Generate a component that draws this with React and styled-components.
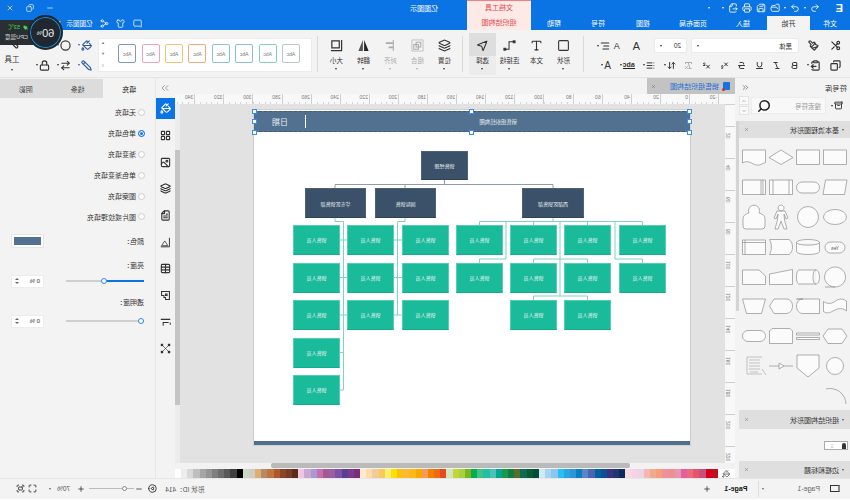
import React from 'react';
import styled, { createGlobalStyle } from 'styled-components';
import {
  Scissors, Paintbrush, Copy, ClipboardPaste, Bold, Italic, Underline, Strikethrough, Subscript, Superscript,
  RemoveFormatting, ArrowUpDown, List, Square, Type, Layers, AlignLeft,
  PaintBucket, LayoutGrid, Image, FileText, Table,
  Search, Undo2, Redo2, Save, FolderOpen, Printer, FileOutput, Share2, Shirt, MessageSquare, Crown, Minus, X,
  Plus, Lock, ArrowLeftRight, Pencil, PlayCircle, Fullscreen, Maximize, ChevronsRight, ChevronsLeft, Copy as RestoreIcon,
  Leaf, ChevronUp, ChevronDown, Archive, Circle, MousePointer2, Wrench,
} from 'lucide-react';

const GlobalStyle = createGlobalStyle`
  html, body { margin: 0; padding: 0; background: #f3f3f3; }
  body { font-family: "Liberation Sans", "Noto Sans CJK SC", sans-serif; }
`;

/* the reference is a horizontally flipped capture, so the whole window is laid out normally and flipped */
const Window = styled.div`
  position: relative;
  width: 850px;
  height: 500px;
  overflow: hidden;
  display: flex;
  flex-direction: column;
  background: #f3f3f3;
  color: #333;
  font-size: 7px;
  transform: scaleX(-1);
`;

/* title bar */
const TitleBar = styled.div`
  display: flex;
  height: 30px;
  background: #0a74e4;
  color: #fff;
`;
const TitleLeft = styled.div`
  width: 319px;
  display: flex;
  flex-direction: column;
`;
const TitleRight = styled.div`
  flex: 1;
  display: flex;
  flex-direction: column;
`;
const QuickBar = styled.div`
  height: 16px;
  display: flex;
  align-items: center;
  padding-left: 7px;
  gap: 4px;
  svg { width: 10px; height: 10px; flex: none; }
`;
const Logo = styled.span`
  width: 13px;
  font: bold 11px "Liberation Sans", sans-serif;
  margin-right: 6px;
`;
const TinyCaret = styled.span`
  width: 0;
  height: 0;
  flex: none;
  border-left: 1.5px solid transparent;
  border-right: 1.5px solid transparent;
  border-top: 2px solid ${(p) => p.$color || 'currentColor'};
  margin-left: ${(p) => p.$gap || 0}px;
`;
const TabRow = styled.div`
  height: 14px;
  display: flex;
`;
const Tab = styled.div`
  width: ${(p) => p.$w}px;
  display: flex;
  align-items: center;
  justify-content: center;
  background: ${(p) => (p.$active ? '#f3f3f3' : 'transparent')};
  color: ${(p) => (p.$active ? '#333' : '#fff')};
`;
const ContextTab = styled.div`
  width: 64px;
  display: flex;
  flex-direction: column;
  align-items: center;
  background: #fde9e6;
  border-top: 1px solid #f08080;
  box-sizing: border-box;
  color: #e5484d;
  span { height: 14.5px; line-height: 14.5px; }
`;
const AppTitle = styled.div`
  height: 16px;
  display: flex;
  align-items: center;
  padding: 0 6px 0 29px;
  svg { width: 8px; height: 8px; margin-left: 12px; }
`;
const AppName = styled.span`
  margin-right: auto;
`;
const AccountRow = styled.div`
  height: 14px;
  display: flex;
  align-items: center;
  padding-left: 325px;
  gap: 7.5px;
  svg { width: 9px; height: 9px; flex: none; }
`;
const Brand = styled.span`
  margin: 0 -2px 0 0;
  font-size: 6.5px;
`;

/* ribbon */
const Ribbon = styled.div`
  height: 48px;
  display: flex;
  background: #f3f3f3;
  border-bottom: 1px solid #e4e4e4;
  box-sizing: border-box;
`;
const SmallGrid = styled.div`
  display: grid;
  grid-template-columns: repeat(${(p) => p.$cols}, ${(p) => p.$col}px);
  grid-auto-rows: 20px;
  padding-top: 5px;
  margin-left: ${(p) => p.$ml || 0}px;
  justify-items: center;
  align-items: center;
`;
const SmallIcon = styled.div`
  display: flex;
  align-items: center;
  gap: 1px;
  color: ${(p) => p.$color || '#333'};
  svg { width: ${(p) => p.$size || 11}px; height: ${(p) => p.$size || 11}px; stroke-width: 2.5; }
`;
const FontGroup = styled.div`
  width: 216px;
  margin-left: 4px;
  display: flex;
  flex-direction: column;
`;
const FontRow = styled.div`
  display: flex;
  align-items: center;
  height: 15px;
  margin-top: 8px;
  gap: 4px;
`;
const FormatRow = styled.div`
  display: flex;
  align-items: center;
  height: 14px;
  margin-top: 5px;
  gap: 8.6px;
  svg { width: 9px; height: 9px; stroke-width: 2.6; }
`;
const SelectBox = styled.div`
  width: ${(p) => p.$w}px;
  height: 15px;
  box-sizing: border-box;
  background: #fff;
  border: 1px solid #eaeaea;
  border-radius: 2px;
  display: flex;
  align-items: center;
  justify-content: space-between;
  padding: 0 5px 0 ${(p) => p.$pl}px;
  font-size: 6.5px;
`;
const LetterIcon = styled.span`
  margin-left: ${(p) => p.$ml || 0}px;
  font: ${(p) => p.$size || 10}px "Liberation Sans", sans-serif;
  color: #333;
`;
const UnderBar = styled.span`
  border-bottom: 1.5px solid #222;
  line-height: 7px;
  font: bold 7px "Liberation Sans", sans-serif;
`;
const Sep = styled.div`
  width: 1px;
  height: 36px;
  align-self: center;
  background: #d9d9d9;
  margin: 0 ${(p) => p.$r}px 0 ${(p) => p.$l}px;
`;
const BigButton = styled.div`
  width: 27px;
  height: 42px;
  margin-top: 3px;
  display: flex;
  flex-direction: column;
  align-items: center;
  color: ${(p) => (p.$dim ? '#aaa' : '#333')};
  background: ${(p) => (p.$active ? 'linear-gradient(#dedede 0 55%, #ececec 55%)' : 'transparent')};
  svg { width: 13px; height: 13px; margin-top: 6px; }
  span { margin-top: 5px; line-height: 8px; white-space: nowrap; font-size: 6.6px; }
  i { margin-top: 3px; }
`;
const Gallery = styled.div`
  width: 214px;
  height: 34px;
  margin-top: 8px;
  padding: 0 0 3px 11px;
  background: #fff;
  border: 1px solid #ececec;
  box-sizing: border-box;
  display: flex;
  align-items: center;
  gap: 5.4px;
`;
const StyleCard = styled.div`
  width: 18px;
  height: 19px;
  flex: none;
  box-sizing: border-box;
  border: 1px solid ${(p) => p.$color};
  border-radius: 2px;
  display: flex;
  align-items: center;
  justify-content: center;
  color: #777;
  font: 5px "Liberation Sans", sans-serif;
`;
const GalleryArrows = styled.div`
  margin-left: 8px;
  height: 28px;
  display: flex;
  flex-direction: column;
  justify-content: space-between;
  align-items: center;
  color: #777;
  font-size: 4px;
`;
const ToolLabel = styled.div`
  margin-left: 13px;
  width: 16px;
  display: flex;
  flex-direction: column;
  align-items: center;
  padding-top: 5px;
  svg { width: 14px; height: 14px; margin-bottom: 4px; }
  span { font-size: 7.5px; }
  i { margin-top: 5px; }
`;

/* cpu badge sits over the ribbon */
const CpuBadge = styled.div`
  position: absolute;
  left: 787px;
  top: 15px;
  width: 35px;
  height: 35px;
  border-radius: 50%;
  background: #20272e;
  box-sizing: border-box;
  border: 2px solid #20272e;
  display: flex;
  align-items: center;
  justify-content: center;
  color: #eee;
  font: 11px "Liberation Sans", sans-serif;
  box-shadow: inset 0 0 0 1px #1592e6;
  z-index: 3;
  small { font-size: 6px; }
`;
const CpuPill = styled.div`
  position: absolute;
  left: 817px;
  top: 20px;
  width: 33px;
  height: 25px;
  box-sizing: border-box;
  padding-left: 5px;
  background: #2a2f34;
  color: #ddd;
  z-index: 2;
  display: flex;
  flex-direction: column;
  justify-content: center;
  gap: 3px;
  font-size: 5.6px;
  line-height: 7px;
  white-space: nowrap;
`;
const CpuTemp = styled.div`
  display: flex;
  align-items: center;
  gap: 3px;
  color: #3fdc4f;
  svg { width: 5px; height: 7px; fill: #3fdc4f; }
`;

/* body */
const Body = styled.div`
  flex: 1;
  display: flex;
  min-height: 0;
`;
const SymbolPanel = styled.div`
  position: relative;
  width: 115px;
  flex: none;
  display: flex;
  flex-direction: column;
  box-sizing: border-box;
  padding-right: 4px;
  background: #f3f3f3;
  overflow: hidden;
`;
const SymbolThumb = styled.i`
  position: absolute;
  right: 1px;
  top: 43px;
  width: 3px;
  height: 190px;
  background: #d4d4d4;
`;
const PanelHead = styled.div`
  height: 19px;
  display: flex;
  align-items: center;
  justify-content: space-between;
  padding: 0 2px 0 3px;
  font-size: 7.4px;
  svg { width: 9px; height: 9px; color: #666; }
`;
const SearchRow = styled.div`
  height: 17px;
  display: flex;
  align-items: center;
  padding-left: 7px;
  svg { flex: none; }
`;
const SearchBox = styled.div`
  width: 78px;
  height: 17px;
  margin-left: 5px;
  box-sizing: border-box;
  background: #f8f8f8;
  border: 1px solid #ececec;
  display: flex;
  align-items: center;
  justify-content: space-between;
  padding: 0 5px 0 4px;
  color: #999;
  font-size: 6.5px;
`;
const Stepper = styled.div`
  width: 11px;
  margin-left: 2px;
  display: flex;
  flex-direction: column;
  gap: 1px;
  div {
    height: 7px;
    background: #fafafa;
    border: 1px solid #e4e4e4;
    display: flex;
    align-items: center;
    justify-content: center;
  }
  svg { width: 6px; height: 6px; color: #777; }
`;
const CategoryBar = styled.div`
  height: ${(p) => p.$h || 17}px;
  margin-top: ${(p) => p.$mt || 0}px;
  flex: none;
  background: #dfdfdf;
  display: flex;
  align-items: center;
  padding: 0 5px 0 6px;
  gap: 3px;
  color: #333;
  svg { margin-left: auto; width: 5px; height: 5px; color: #666; }
`;
const ShapeGrid = styled.div`
  display: grid;
  grid-template-columns: repeat(4, 27px);
  grid-auto-rows: 29.9px;
  padding: 4px 0 0 1px;
  justify-items: center;
  align-items: center;
`;
const OrgSample = styled.div`
  width: 24px;
  height: 9px;
  margin: 12px 0 0 2px;
  box-sizing: border-box;
  background: #fff;
  border: 1px solid #aaa;
  display: flex;
  align-items: center;
  justify-content: space-between;
  padding: 0 5px 0 1px;
  color: #888;
  font-size: 4px;
`;
const OrgHead = styled.i`
  width: 4px;
  height: 6px;
  background: #333;
  border-radius: 2px 2px 0 0;
`;
const CenterColumn = styled.div`
  width: 560px;
  flex: none;
  display: flex;
  flex-direction: column;
`;
const DocTabs = styled.div`
  height: 16px;
  display: flex;
  background: #f3f3f3;
  flex: none;
`;
const DocTab = styled.div`
  width: 88px;
  display: flex;
  align-items: center;
  padding: 0 4px 0 5px;
  box-sizing: border-box;
  background: #c3c3c3;
  color: #1b6ed8;
  gap: 4px;
  svg { width: 5px; height: 5px; margin-left: auto; color: #666; }
`;
const DocIcon = styled.i`
  position: relative;
  width: 7px;
  height: 8px;
  background: #1672e0;
  border-radius: 1px;
  &::after {
    content: '';
    position: absolute;
    right: -1px;
    bottom: -1px;
    width: 3px;
    height: 3px;
    border-radius: 50%;
    background: #e3212b;
  }
`;
const RulerRow = styled.div`
  height: 10px;
  display: flex;
  flex: none;
  padding-left: 16px;
  box-sizing: border-box;
  background: #f8f8f8;
  overflow: hidden;
`;
const RulerCell = styled.div`
  width: 29.1px;
  flex: none;
  box-sizing: border-box;
  border-left: 1px solid #cfcfcf;
  padding-left: 1px;
  color: #777;
  font: 5px/7px "Liberation Sans", sans-serif;
  background: repeating-linear-gradient(90deg, transparent 0 4.8px, #d4d4d4 4.8px 5.8px) 0 100% / 100% 2px no-repeat;
`;
const CanvasRow = styled.div`
  flex: 1;
  display: flex;
  min-height: 0;
`;
const SideRuler = styled.div`
  width: 10px;
  flex: none;
  background: #f8f8f8;
  display: flex;
  flex-direction: column;
  overflow: hidden;
`;
const SideCell = styled.div`
  height: 32px;
  flex: none;
  box-sizing: border-box;
  border-top: 1px solid #cfcfcf;
  color: #777;
  font: 5px/6px "Liberation Sans", sans-serif;
  writing-mode: vertical-rl;
  padding-top: 6px;
  &:first-child { height: 22px; }
`;
const Canvas = styled.div`
  flex: 1;
  background: #e2e2e2;
  padding: 6px 0 0 35px;
  overflow: hidden;
`;
const Sheet = styled.div`
  position: relative;
  width: 436px;
  height: 335px;
  background: #fff;
  box-shadow: 0 0 0 1px #d0d0d0;
  display: flex;
  flex-direction: column;
  justify-content: space-between;
`;
const SheetHeader = styled.div`
  height: 21px;
  margin-top: 1px;
  background: #52708f;
  color: #e8edf2;
  display: flex;
  align-items: center;
  padding-left: 173px;
  border-top: 1px dashed #3f5a78;
  border-bottom: 1px dashed #3f5a78;
  box-sizing: border-box;
`;
const SheetTitle = styled.span`
  font-size: 5.4px;
`;
const DateGroup = styled.div`
  margin-left: auto;
  display: flex;
  align-items: center;
  gap: 17px;
  padding-right: 18px;
  font-size: 8px;
  i { width: 1px; height: 13px; background: #fff; }
`;
const SheetFooter = styled.div`
  height: 4px;
  background: #4f6f8f;
`;
const Handle = styled.i`
  position: absolute;
  left: ${(p) => p.$x}px;
  top: ${(p) => p.$y}px;
  width: 5px;
  height: 5px;
  background: #fff;
  border: 1px solid #3b8df0;
  box-sizing: border-box;
  z-index: 2;
`;
const Node = styled.div`
  position: absolute;
  left: ${(p) => p.$x - 160}px;
  top: ${(p) => p.$y - 110}px;
  width: ${(p) => p.$w}px;
  height: ${(p) => p.$h}px;
  background: ${(p) => (p.$dark ? '#3b5069' : '#1abb9b')};
  box-sizing: border-box;
  border: 1px solid ${(p) => (p.$dark ? '#4e6177' : '#55cdb4')};
  border-bottom-color: ${(p) => (p.$dark ? '#2f4259' : '#14ac8d')};
  color: #e8f4f1;
  font-size: 5px;
  display: flex;
  align-items: center;
  justify-content: center;
`;
const Wires = styled.svg`
  position: absolute;
  left: 0;
  top: 0;
  width: 436px;
  height: 335px;
  fill: none;
`;
const VScroll = styled.div`
  width: 5px;
  flex: none;
  background: #ececec;
  padding-top: 46px;
  box-sizing: border-box;
`;
const VThumb = styled.div`
  height: 255px;
  background: #c4c4c4;
`;
const HScroll = styled.div`
  height: 6px;
  flex: none;
  background: #f2f2f2;
  padding-left: 105px;
  box-sizing: border-box;
`;
const HThumb = styled.div`
  width: 359px;
  height: 5px;
  background: #bababa;
  border-radius: 2px;
`;
const Palette = styled.div`
  height: 9px;
  flex: none;
  display: flex;
  background: #fff;
`;
const FillMark = styled.div`
  width: 17px;
  display: flex;
  align-items: center;
  justify-content: center;
  svg { width: 8px; height: 8px; color: #333; }
`;
const Swatch = styled.i`
  flex: 1;
  background: ${(p) => p.$c};
`;
const IconStrip = styled.div`
  width: 19px;
  flex: none;
  border-right: 1px solid #e6e6e6;
  display: flex;
  flex-direction: column;
  align-items: stretch;
`;
const StripTop = styled.div`
  height: 20px;
  display: flex;
  align-items: center;
  justify-content: center;
  svg { width: 12px; height: 12px; color: #666; stroke-width: 1.2; }
`;
const StripItem = styled.div`
  height: ${(p) => (p.$active ? 21 : 26.7)}px;
  margin-bottom: ${(p) => (p.$active ? 3 : 0)}px;
  display: flex;
  align-items: center;
  justify-content: center;
  background: ${(p) => (p.$active ? '#0a74e4' : 'transparent')};
  color: ${(p) => (p.$active ? '#fff' : '#333')};
  svg { width: 11px; height: 11px; }
  .lucide { stroke-width: 2.4; }
`;
const FormatPanel = styled.div`
  flex: 1;
  display: flex;
  flex-direction: column;
  padding-top: 1px;
`;
const FormatTabs = styled.div`
  height: 19px;
  display: flex;
  flex: none;
`;
const FormatTab = styled.div`
  flex: 1;
  display: flex;
  align-items: center;
  justify-content: center;
  font-size: 7px;
  background: ${(p) => (p.$active ? '#f3f3f3' : '#dcdcdc')};
  color: ${(p) => (p.$active ? '#111' : '#444')};
`;
const RadioList = styled.div`
  padding: 4px 0 0 10px;
  display: flex;
  flex-direction: column;
`;
const RadioRow = styled.div`
  height: 20.9px;
  display: flex;
  align-items: center;
  gap: 2px;
`;
const Radio = styled.i`
  width: 7px;
  height: 7px;
  box-sizing: border-box;
  border-radius: 50%;
  background: ${(p) => (p.$on ? '#1677e6' : '#fff')};
  border: 1px solid ${(p) => (p.$on ? '#1677e6' : '#ccc')};
  box-shadow: ${(p) => (p.$on ? 'inset 0 0 0 1px #fff' : 'none')};
`;
const ColorRow = styled.div`
  display: flex;
  align-items: center;
  height: 14px;
  margin-top: 7px;
  padding: 0 11px;
  justify-content: space-between;
`;
const ColorBox = styled.div`
  width: 33px;
  height: 14px;
  box-sizing: border-box;
  padding: 2px;
  background: #fff;
  border: 1px solid #e6e6e6;
  &::before {
    content: '';
    display: block;
    height: 100%;
    background: #52708f;
  }
`;
const FieldLabel = styled.div`
  height: 8px;
  line-height: 8px;
  padding-left: 11px;
  margin-top: ${(p) => p.$mt}px;
`;
const SliderRow = styled.div`
  height: 13px;
  margin-top: ${(p) => p.$mt}px;
  padding: 0 11px;
  display: flex;
  align-items: center;
  justify-content: space-between;
`;
const Track = styled.div`
  position: relative;
  width: 78px;
  height: 2px;
  background: linear-gradient(90deg, #0a74e4 ${(p) => p.$value}%, #cfcfcf ${(p) => p.$value}%);
`;
const Thumb = styled.i`
  position: absolute;
  left: ${(p) => p.$value}%;
  top: -2px;
  width: 6px;
  height: 6px;
  margin-left: -3px;
  box-sizing: border-box;
  border-radius: 50%;
  background: #fff;
  border: 1px solid #2f86ea;
`;
const Spin = styled.div`
  width: 33px;
  height: 13px;
  box-sizing: border-box;
  background: #fff;
  border: 1px solid #ececec;
  display: flex;
  align-items: center;
  justify-content: space-between;
  padding: 0 3px;
  font: 6px "Liberation Sans", sans-serif;
`;
const SpinArrows = styled.span`
  display: flex;
  flex-direction: column;
  gap: 2px;
`;
const SpinUp = styled.i`
  width: 0;
  height: 0;
  border-left: 2px solid transparent;
  border-right: 2px solid transparent;
  border-bottom: 2.5px solid #666;
`;
const SpinDown = styled(SpinUp)`
  border-bottom: 0;
  border-top: 2.5px solid #666;
`;

/* status bar */
const StatusBar = styled.div`
  height: 20px;
  flex: none;
  margin-bottom: 1px;
  display: flex;
  align-items: center;
  background: #f3f3f3;
  border-top: 1px solid #e6e6e6;
  box-sizing: border-box;
  padding-left: 10px;
`;
const StatusBottom = styled.div`
  height: 1px;
  background: #fff;
  flex: none;
`;
const PageIcon = styled.i`
  width: 10px;
  height: 7px;
  box-sizing: border-box;
  border: 1px solid #333;
  border-left: 2px solid #888;
`;
const PageName = styled.span`
  flex: none;
  margin-left: ${(p) => p.$ml}px;
  color: ${(p) => (p.$bold ? '#111' : '#666')};
  font: ${(p) => (p.$bold ? 'bold' : 'normal')} 7px "Liberation Sans", sans-serif;
  white-space: nowrap;
`;
const StatusSep = styled.i`
  width: 1px;
  height: 16px;
  background: #ddd;
  margin: 0 8px 0 3px;
`;
const StatusIcon = styled.div`
  margin-left: ${(p) => p.$ml}px;
  display: flex;
  color: #333;
  svg { width: ${(p) => p.$size || 8}px; height: ${(p) => p.$size || 8}px; stroke-width: 2.4; }
`;
const ZoomTrack = styled.div`
  position: relative;
  margin-left: ${(p) => p.$ml}px;
  width: 45px;
  height: 1px;
  background: #bbb;
`;
const ZoomThumb = styled.i`
  position: absolute;
  left: 7px;
  top: -2px;
  width: 5px;
  height: 5px;
  box-sizing: border-box;
  border-radius: 50%;
  background: #fff;
  border: 1px solid #888;
`;
const StatusText = styled.span`
  margin-left: ${(p) => p.$ml}px;
  color: #555;
  font-size: 6.6px;
  white-space: nowrap;
`;

const tabs = [
  ['文件', 40], ['开始', 43, true], ['插入', 48], ['页面布局', 52], ['视图', 48], ['符号', 42], ['帮助', 46],
];
const styleCards = ['#bcc5c5', '#7dd3bb', '#8ab9e6', '#86c5d8', '#f2a878', '#f5c56d', '#e9a6bd', '#8299b5'];

const palette = [
  '#c00f1f', '#d6001c', '#c94f7c', '#e5566b', '#ea6b7c', '#e85d9b', '#e595b5', '#f08f8f', '#f0909b', '#f5a07a', '#f0ab8f', '#f4b8b0', '#e8d5e8', '#f8d1e4', '#f7d8e3',
  '#0c2a5e', '#1f3571', '#3c2f80', '#0f4d92', '#055e9e', '#4667b0', '#5a86c5', '#0a7cc4', '#2b95d8', '#2aa5e0', '#27c0f0', '#8cc6ec', '#a6d4ef', '#cfe9f5',
  '#004d38', '#0a5a3a', '#0e6b50', '#5d6a28', '#137a41', '#1e9648', '#00a88e', '#4fc0b8', '#1cc2a2', '#44bf86', '#00b050', '#7ab51d', '#a8cf45', '#c3d82e', '#d5e4c0',
  '#e9481f', '#ef6a10', '#f57f00', '#f59a5b', '#f8a900', '#fdb813', '#fbb934', '#fcc10e', '#fee100', '#fdf06b', '#fcc75c', '#f0cc96', '#fddcaa', '#fdeccd',
  '#7b2d78', '#7d3a8c', '#5c3d96', '#7c52a5', '#9a5fa0', '#a35a92', '#c86eae', '#a898d4', '#c8a7d2', '#f0c6e0',
  '#5c2a16', '#773a26', '#8a4524', '#b0562a', '#c0743e', '#b58a66', '#dfae72', '#d2cdc2', '#ccd6cb',
  '#000000', '#3f3f3f', '#595959', '#6e6e6e', '#7f7f7f', '#959595', '#a5a5a5', '#bfbfbf', '#d9d9d9', '#ededed', '#ffffff',
];

const rulerLabels = ['-20', '0', '20', '40', '60', '80', '100', '120', '140', '160', '180', '200', '220', '240', '260', '280', '300', '320', '340'];
const sideLabels = ['', '20', '40', '60', '80', '100', '120', '140', '160', '180', '200', '220', '240'];

// custom ribbon and strip glyphs, lucide has nothing close for these
const Ico = ({ children, box = 14 }) => (
  <svg viewBox={`0 0 ${box} ${box}`} fill="none" stroke="currentColor" strokeWidth="1.1">{children}</svg>
);
const ConnectorIcon = () => (
  <Ico><path d="M3 3H7.5V11H11" /><rect x="1" y="2" width="2" height="2" fill="currentColor" /><rect x="11" y="10" width="2" height="2" fill="currentColor" /></Ico>
);
const GroupIcon = () => (
  <Ico><path d="M1 1H13V13H1Z" strokeWidth=".7" /><path d="M3.5 3.5H8.5V8.5H3.5ZM6 6H11V11H6Z" /></Ico>
);
const AlignIcon = () => (
  <Ico><path d="M4 1V13" /><path d="M4 4.5H12M4 9H9" strokeWidth="2" /></Ico>
);
const FlipIcon = () => (
  <Ico><path d="M6.3 1V13H1.5Z" fill="#222" stroke="none" /><path d="M7.7 1V13H12.5Z" fill="#555" stroke="none" /></Ico>
);
const SizeIcon = () => (
  <Ico><path d="M4 2H12V9.5H4Z" strokeWidth="1.3" /><path d="M1.5 1V12.5H13" strokeWidth="1.3" /></Ico>
);
const ChartIcon = () => (
  <Ico><path d="M2 1V12.5H13" strokeWidth="1.2" /><path d="M4 11L8 5 12 11Z" strokeWidth="1" /></Ico>
);
const NotchIcon = () => (
  <Ico><path d="M2 2H12V7H9V9.5H7V12H2ZM5 5H7V7H5Z" strokeWidth="1.3" /></Ico>
);
const RuleIcon = () => (
  <Ico><path d="M1 3H13" strokeWidth="1.6" /><path d="M3 7H10V11" strokeWidth="1.3" /><path d="M1 7V10" strokeWidth="1.3" /></Ico>
);
const CrossIcon = () => (
  <Ico>
    <path d="M3 3L11 11M11 3L3 11" strokeWidth=".8" />
    <rect x="1" y="1" width="3" height="3" fill="currentColor" stroke="none" />
    <rect x="10" y="1" width="3" height="3" fill="currentColor" stroke="none" />
    <rect x="1" y="10" width="3" height="3" fill="currentColor" stroke="none" />
    <rect x="10" y="10" width="3" height="3" fill="currentColor" stroke="none" />
  </Ico>
);

const strip = [LayoutGrid, Image, Layers, FileText, ChartIcon, Table, NotchIcon, RuleIcon, CrossIcon];

const fills = ['无填充', '单色填充', '渐变填充', '单色渐变填充', '图案填充', '图片或纹理填充'];

// diagram, in page coordinates of the window
const green = [
  [510, [225, 263, 300, 338, 375]],
  [456, [225, 263, 300]],
  [401, [225, 263, 300]],
  [347, [225, 263]],
  [293, [225, 263, 300]],
  [239, [225, 263, 300]],
  [184, [225, 263]],
];
const bosses = [
  { x: 382, y: 151, w: 47, h: 29, t: '销售经理' },
  { x: 484, y: 188, w: 61, h: 30, t: '华东区销售部' },
  { x: 414, y: 188, w: 61, h: 30, t: '国际销售' },
  { x: 266, y: 188, w: 62, h: 30, t: '西部区销售部' },
];
const grayWires = 'M405.5 180V184.5M297 188V184.5H515V188M445 184.5V188';
const greenWires = [
  'M515 218V221.5H506.5V390H510',
  'M503 240H510M503 277.5H510M503 315H510M506.5 352.5H510',
  'M445 218V221.5H452.5V315',
  'M448 240H456M448 277.5H456M448 315H456',
  'M297 218V221.5M207.5 225V221.5H370.5V225M262.5 221.5V225M316.5 221.5V225',
  'M344 221.5V259M290 221.5V296M235 221.5V259',
  'M344 259H370.5V263M262.5 263V259H316.5V263M207.5 263V259H235',
  'M262.5 300V296H316.5V300',
].join('');

const S = (props) => <svg width="26" height="20" viewBox="0 0 26 20" fill="#fbfbfb" stroke="#8e8e8e" strokeWidth=".7" {...props} />;

const shapes = [
  <S><rect x="1.5" y="3" width="23" height="14.5" /></S>,
  <S><rect x="1.5" y="3" width="23" height="14.5" /></S>,
  <S><path d="M13 3L25 10.5 13 17.5 1 10.5Z" /></S>,
  <S><path d="M1.5 3H24.5V16C19 12.5 15 17 11 18 7 19 4 16 1.5 15.5Z" /></S>,
  <S><path d="M1 3H22.5L25 17.5H3.5Z" /></S>,
  <S><rect x="1.5" y="5" width="23" height="11" rx="5.5" /></S>,
  <S><path d="M1.5 3H24.5V17.5H1.5ZM5 3V17.5M21 3V17.5" /></S>,
  <S><path d="M1.5 3H24.5V17.5H1.5ZM4 3V17.5M6 3V17.5M1.5 3" /></S>,
  <S><ellipse cx="13" cy="10" rx="11.5" ry="7.5" /></S>,
  <S viewBox="0 0 26 24" height="24"><circle cx="13" cy="12" r="10.5" /></S>,
  <S viewBox="0 0 26 26" height="26"><path d="M13 1a3 3 0 1 1-.1 0M9 7H17L20 14 18 15 16 10 16.5 16 19 25H16L13 17 10 25H7L9.5 16 10 10 8 15 6 14Z" /></S>,
  <S viewBox="0 0 26 26" height="26"><path d="M8 9a5.5 5.5 0 1 1 10 0C22 10 24 12 24 15V22Q24 25 21 25H5Q2 25 2 22V15C2 12 4 10 8 9Z" /></S>,
  <S><rect x="3" y="5" width="20" height="11" rx="5.5" /><text x="13" y="12.5" fontSize="5" textAnchor="middle" fill="#555" stroke="none">Yes</text></S>,
  <S><path d="M1.5 5.5C1.5 1.5 24.5 1.5 24.5 5.5V14.5C24.5 18.5 1.5 18.5 1.5 14.5ZM1.5 5.5C1.5 9 24.5 9 24.5 5.5" /></S>,
  <S><path d="M5 2.5H24.5C22 7 22 13 24.5 17.5H5C2.5 16 1.5 13 1.5 10S2.5 4 5 2.5Z" /></S>,
  <S><path d="M1.5 3H24.5V17.5H1.5ZM1.5 5.5H24.5M22 3V17.5" /></S>,
  <S viewBox="0 0 26 24" height="24"><path d="M13 2a10.5 10 0 1 1-.1 0ZM13 22H23" /></S>,
  <S><path d="M4 3H21C23 3 24.5 6 24.5 10S23 17 21 17H4C2.5 17 1.5 14 1.5 10S2.5 3 4 3ZM21 3C19 3 18 6 18 10S19 17 21 17" transform="matrix(-1 0 0 1 26 0)" /></S>,
  <S><path d="M1.5 2.5L24.5 7V17.5H1.5Z" /></S>,
  <S><path d="M1.5 3H18L24.5 9V17.5H1.5Z" transform="matrix(-1 0 0 1 26 0)" /></S>,
  <S><path d="M1.5 5C7 1 11 4 14 6 17 8 21 8 24.5 5.5V15.5C20 18.5 17 16 13 14 9 12 5 12 1.5 15Z" /></S>,
  <S><path d="M1.5 3H24.5V17.5H8C4 17.5 1.5 14 1.5 10S4 3 8 3Z" transform="matrix(-1 0 0 1 26 0)" /></S>,
  <S><path d="M8 3H20L24.5 10 20 17.5H8C4 17.5 1.5 14 1.5 10S4 3 8 3Z" /></S>,
  <S><path d="M1.5 3H24.5L20.5 17.5H5.5Z" /></S>,
  <S><path d="M6 3H20L25 10 20 17.5H6L1 10Z" /></S>,
  <S><path d="M1.5 8H24.5V10H1.5ZM1.5 12.5H24.5V14.5H1.5Z" transform="translate(0 -1)" /></S>,
  <S><path d="M4 2.5H22L24.5 5V17.5H1.5V5Z" /></S>,
  <S><rect x="1.5" y="4.5" width="23" height="11" rx="5.5" /></S>,
  <S><circle cx="13" cy="10" r="8.5" /></S>,
  <S viewBox="0 0 26 24" height="24"><path d="M2 1H24V14L13 23 2 14Z" /></S>,
  <S><path d="M1 10H10M15 10H25M15 7V13L10 10Z" /></S>,
  <S fill="none" strokeWidth=".5"><path d="M5 1H20V18H5M1 19L5 13M7 4H18M7 7H18M7 10H18M7 13H18M9 16H17" /></S>,
  <S viewBox="0 0 26 24" height="24" fill="none"><path d="M2 20A16 16 0 0 1 22 5" /></S>,
];

const App = () => (
  <Window>
    <GlobalStyle />
    <TitleBar>
      <TitleLeft>
        <QuickBar>
          <Logo>E</Logo>
          <Undo2 />
          <TinyCaret />
          <Redo2 />
          <TinyCaret />
          <FolderOpen />
          <Save />
          <Printer />
          <FileOutput />
          <TinyCaret />
          <TinyCaret $gap={8} />
        </QuickBar>
        <TabRow>
          {tabs.map(([t, w, on]) => (
            <Tab key={t} $w={w} $active={on}>{t}</Tab>
          ))}
        </TabRow>
      </TitleLeft>
      <ContextTab>
        <span>文档工具</span>
        <span>组织结构图</span>
      </ContextTab>
      <TitleRight>
        <AppTitle>
          <AppName>亿图图示</AppName>
          <Minus />
          <RestoreIcon />
          <X />
        </AppTitle>
        <AccountRow>
          <MessageSquare />
          <Shirt />
          <Share2 />
          <Brand>亿图图示</Brand>
          <Crown color="#f7b733" fill="#f7b733" />
        </AccountRow>
      </TitleRight>
    </TitleBar>

    <Ribbon>
      <SmallGrid $cols={2} $col={22} $ml={3}>
        <SmallIcon><Scissors /></SmallIcon>
        <SmallIcon><Paintbrush /></SmallIcon>
        <SmallIcon><Copy /></SmallIcon>
        <SmallIcon><ClipboardPaste /><TinyCaret /></SmallIcon>
      </SmallGrid>
      <FontGroup>
        <FontRow>
          <SelectBox $w={108} $pl={6}>黑体<TinyCaret /></SelectBox>
          <SelectBox $w={33} $pl={5}>20<TinyCaret /></SelectBox>
          <LetterIcon $size={11} $ml={10}>A</LetterIcon>
          <LetterIcon $size={9} $ml={9}>A</LetterIcon>
          <SmallIcon $size={10}><AlignLeft /><TinyCaret /></SmallIcon>
        </FontRow>
        <FormatRow>
          <Bold />
          <Italic />
          <Underline />
          <Strikethrough />
          <Subscript />
          <Superscript />
          <RemoveFormatting color="#aaa" />
          <SmallIcon $size={9}><ArrowUpDown /><TinyCaret /></SmallIcon>
          <SmallIcon $size={9}><List /><TinyCaret /></SmallIcon>
          <SmallIcon><UnderBar>abc</UnderBar><TinyCaret /></SmallIcon>
          <SmallIcon><LetterIcon $size={10}>A</LetterIcon><TinyCaret /></SmallIcon>
        </FormatRow>
      </FontGroup>
      <Sep $l={-1} $r={6} />
      <BigButton><Square /><span>形状</span><TinyCaret as="i" /></BigButton>
      <BigButton><Type /><span>文本</span></BigButton>
      <BigButton><ConnectorIcon /><span>连接线</span><TinyCaret as="i" /></BigButton>
      <BigButton $active><MousePointer2 /><span>选择</span><TinyCaret as="i" /></BigButton>
      <Sep $l={6} $r={4} />
      <BigButton><Layers /><span>位置</span><TinyCaret as="i" /></BigButton>
      <BigButton $dim><GroupIcon /><span>组合</span><TinyCaret as="i" /></BigButton>
      <BigButton $dim><AlignIcon /><span>对齐</span><TinyCaret as="i" /></BigButton>
      <BigButton><FlipIcon /><span>翻转</span><TinyCaret as="i" /></BigButton>
      <BigButton><SizeIcon /><span>大小</span><TinyCaret as="i" /></BigButton>
      <Sep $l={5} $r={5} />
      <Gallery>
        {styleCards.map((c) => (
          <StyleCard key={c} $color={c}>Abc</StyleCard>
        ))}
        <GalleryArrows><span>▲</span><span>▼</span><span>≡</span></GalleryArrows>
      </Gallery>
      <SmallGrid $cols={3} $col={21} $ml={2}>
        <SmallIcon $color="#2d5f9e"><PaintBucket /><TinyCaret /></SmallIcon>
        <SmallIcon><Circle /><TinyCaret /></SmallIcon>
        <SmallIcon />
        <SmallIcon $color="#2d5f9e"><Pencil /><TinyCaret /></SmallIcon>
        <SmallIcon><ArrowLeftRight /><TinyCaret /></SmallIcon>
        <SmallIcon><Lock /><TinyCaret /></SmallIcon>
      </SmallGrid>
      <ToolLabel><Wrench /><span>工具</span><TinyCaret as="i" /></ToolLabel>
    </Ribbon>

    <CpuBadge>60<small>%</small></CpuBadge>
    <CpuPill>
      <CpuTemp><Leaf />53℃</CpuTemp>
      <span>CPU温度</span>
    </CpuPill>

    <Body>
      <SymbolPanel>
        <SymbolThumb />
        <PanelHead>符号库<ChevronsLeft /></PanelHead>
        <SearchRow>
          <SmallIcon $size={9}><Archive /><TinyCaret /></SmallIcon>
          <SearchBox>搜索符号<Search size={14} strokeWidth={2.6} color="#222" /></SearchBox>
          <Stepper>
            <div><ChevronUp /></div>
            <div><ChevronDown /></div>
          </Stepper>
        </SearchRow>
        <CategoryBar $mt={7}><TinyCaret $color="#555" />基本流程图形状<X /></CategoryBar>
        <ShapeGrid>{shapes.map((s, i) => <React.Fragment key={i}>{s}</React.Fragment>)}</ShapeGrid>
        <CategoryBar $h={19} $mt={-1}><TinyCaret $color="#555" />组织结构图形状<X /></CategoryBar>
        <OrgSample><OrgHead />三</OrgSample>
        <CategoryBar $mt={11}><TinyCaret $color="#555" />边框和标题<X /></CategoryBar>
      </SymbolPanel>

      <CenterColumn>
        <DocTabs>
          <DocTab><DocIcon />销售组织结构图<X /></DocTab>
        </DocTabs>
        <RulerRow>
          {rulerLabels.map((l) => <RulerCell key={l}>{l}</RulerCell>)}
        </RulerRow>
        <CanvasRow>
          <SideRuler>
            {sideLabels.map((l, i) => <SideCell key={i}>{l}</SideCell>)}
          </SideRuler>
          <Canvas>
            <Sheet>
              <SheetHeader>
                <SheetTitle>销售组织结构图</SheetTitle>
                <DateGroup><i />日期</DateGroup>
              </SheetHeader>
              <SheetFooter />
              <Wires viewBox="160 110 436 335">
                <path d={grayWires} stroke="#8c9cad" strokeWidth="1" />
                <path d={greenWires} stroke="#7fd3c0" strokeWidth="1" />
              </Wires>
              {bosses.map((b) => (
                <Node key={b.x} $dark $x={b.x} $y={b.y} $w={b.w} $h={b.h}>{b.t}</Node>
              ))}
              {green.flatMap(([x, rows]) => rows.map((y) => (
                <Node key={`${x}-${y}`} $x={x} $y={y} $w={47} $h={29.5}>销售人员</Node>
              )))}
              {[-2, 216, 433].flatMap((x) => [-1, 9, 20].map((y) => (
                x === 216 && y === 9 ? null : <Handle key={`${x}${y}`} $x={x} $y={y} />
              )))}
            </Sheet>
          </Canvas>
          <VScroll><VThumb /></VScroll>
        </CanvasRow>
        <HScroll><HThumb /></HScroll>
        <Palette>
          <FillMark><PaintBucket /></FillMark>
          {palette.map((c, i) => <Swatch key={i} $c={c} />)}
        </Palette>
      </CenterColumn>

      <IconStrip>
        <StripTop><ChevronsRight /></StripTop>
        <StripItem $active><PaintBucket /></StripItem>
        {strip.map((I, i) => <StripItem key={i}><I /></StripItem>)}
      </IconStrip>

      <FormatPanel>
        <FormatTabs>
          <FormatTab $active>填充</FormatTab>
          <FormatTab>线条</FormatTab>
          <FormatTab>阴影</FormatTab>
        </FormatTabs>
        <RadioList>
          {fills.map((f, i) => (
            <RadioRow key={f}><Radio $on={i === 1} />{f}</RadioRow>
          ))}
        </RadioList>
        <ColorRow>颜色：<ColorBox /></ColorRow>
        <FieldLabel $mt={14}>亮度：</FieldLabel>
        <SliderRow $mt={4.5}>
          <Track $value={51}><Thumb $value={51} /></Track>
          <Spin>0 %<SpinArrows><SpinUp /><SpinDown /></SpinArrows></Spin>
        </SliderRow>
        <FieldLabel $mt={11.5}>透明度：</FieldLabel>
        <SliderRow $mt={7.5}>
          <Track $value={4}><Thumb $value={4} /></Track>
          <Spin>0 %<SpinArrows><SpinUp /><SpinDown /></SpinArrows></Spin>
        </SliderRow>
      </FormatPanel>
    </Body>

    <StatusBar>
      <PageIcon />
      <PageName $ml={10}>Page-1</PageName>
      <TinyCaret $gap={33} $color="#666" />
      <StatusSep />
      <PageName $ml={3} $bold>Page-1</PageName>
      <StatusIcon $ml={13}><Plus /></StatusIcon>
      <StatusText $ml={499}>形状 ID：414</StatusText>
      <StatusIcon $ml={8} $size={9}><PlayCircle /></StatusIcon>
      <StatusIcon $ml={5}><Minus /></StatusIcon>
      <ZoomTrack $ml={1}><ZoomThumb /></ZoomTrack>
      <StatusIcon $ml={4}><Plus /></StatusIcon>
      <StatusText $ml={7}>70%</StatusText>
      <TinyCaret $gap={6} $color="#666" />
      <StatusIcon $ml={12} $size={9}><Maximize /></StatusIcon>
      <StatusIcon $ml={3} $size={9}><Fullscreen /></StatusIcon>
    </StatusBar>
    <StatusBottom />
  </Window>
);

export default App;
